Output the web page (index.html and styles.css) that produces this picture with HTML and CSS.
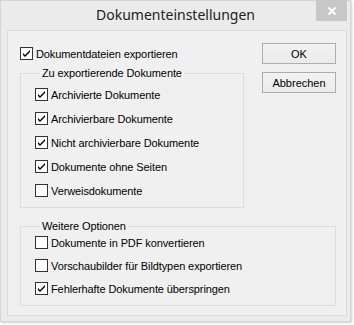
FILE: index.html
```html
<!DOCTYPE html>
<html lang="de">
<head>
<meta charset="utf-8">
<title>Dokumenteinstellungen</title>
<link rel="stylesheet" href="styles.css">
</head>
<body>
<div class="window">
  <div class="titlebar">
    <span class="title">Dokumenteinstellungen</span>
    <span class="close"><svg width="10" height="10" viewBox="0 0 10 10"><path d="M1.5 1.5 L8.5 8.5 M8.5 1.5 L1.5 8.5" stroke="#fff" stroke-width="2.2" fill="none"/></svg></span>
  </div>
  <div class="client">
    <div class="top">
      <div class="leftcol">
        <label class="chk top-chk"><span class="box on"></span><span class="lbl">Dokumentdateien exportieren</span></label>
        <fieldset class="group g1">
          <legend>Zu exportierende Dokumente</legend>
          <label class="chk"><span class="box on"></span><span class="lbl">Archivierte Dokumente</span></label>
          <label class="chk"><span class="box on"></span><span class="lbl">Archivierbare Dokumente</span></label>
          <label class="chk"><span class="box on"></span><span class="lbl">Nicht archivierbare Dokumente</span></label>
          <label class="chk"><span class="box on"></span><span class="lbl">Dokumente ohne Seiten</span></label>
          <label class="chk"><span class="box"></span><span class="lbl">Verweisdokumente</span></label>
        </fieldset>
      </div>
      <div class="buttons">
        <button class="btn">OK</button>
        <button class="btn">Abbrechen</button>
      </div>
    </div>
    <fieldset class="group g2">
      <legend>Weitere Optionen</legend>
      <label class="chk"><span class="box"></span><span class="lbl">Dokumente in PDF konvertieren</span></label>
      <label class="chk"><span class="box"></span><span class="lbl">Vorschaubilder für Bildtypen exportieren</span></label>
      <label class="chk"><span class="box on"></span><span class="lbl">Fehlerhafte Dokumente überspringen</span></label>
    </fieldset>
  </div>
</div>
</body>
</html>
```
FILE: styles.css
```css
html, body {
  margin: 0;
  padding: 0;
  background: #ffffff;
}
body {
  width: 354px;
  height: 325px;
  overflow: hidden;
}
.window {
  width: 351px;
  height: 322px;
  background: #ebebeb;
  box-sizing: border-box;
  border: 1px solid #d4d4d4;
  box-shadow: 1px 1px 2px rgba(0,0,0,0.18);
  display: flex;
  flex-direction: column;
}
.titlebar {
  height: 29px;
  display: flex;
  justify-content: center;
  align-items: center;
  position: relative;
}
.title {
  font-family: "Noto Sans", "Open Sans", sans-serif;
  font-size: 14px;
  color: #222;
  margin-top: -3px;
}
.close {
  position: absolute;
  top: -1px;
  right: 3px;
  width: 31px;
  height: 21px;
  background: #c7c7c7;
  display: flex;
  align-items: center;
  justify-content: center;
}
.client {
  margin: 0 3px 5px 6px;
  flex: 1;
  background: #f0f0f0;
  border: 1px solid #dadada;
  padding: 0 10px 0 12px;
  font-family: "Liberation Sans", Arial, sans-serif;
  font-size: 11px;
  color: #000;
}
.top {
  display: flex;
  justify-content: space-between;
}
.leftcol {
  display: flex;
  flex-direction: column;
}
.chk {
  display: flex;
  align-items: center;
  height: 13px;
  letter-spacing: -0.1px;
}
.box {
  width: 13px;
  height: 13px;
  box-sizing: border-box;
  border: 1px solid #333;
  background: #fff;
  flex: none;
  margin-right: 3px;
}
.box.on {
  background: #fff url("data:image/svg+xml;utf8,<svg xmlns='http://www.w3.org/2000/svg' width='11' height='11' viewBox='0 0 11 11'><path d='M2 5 L4 7 L9 2 L9 4 L4 9 L2 7 Z' fill='black'/></svg>") no-repeat center;
}
.top-chk {
  margin-top: 16px;
}
.group {
  margin: 0;
  border: 1px solid #dcdcdc;
  padding: 0 0 0 14px;
  min-width: 0;
  display: flex;
  flex-direction: column;
}
.group legend {
  padding: 0 2px;
  margin-left: 5px;
  line-height: 13px;
  letter-spacing: -0.1px;
}
.g1 {
  width: 224px;
  box-sizing: border-box;
  margin-top: 7px;
  padding-top: 8px;
  padding-bottom: 10px;
  gap: 11px;
}
.g2 {
  width: 316px;
  box-sizing: border-box;
  margin-top: 12px;
  padding-top: 3px;
  padding-bottom: 10px;
  gap: 10px;
}
.buttons {
  display: flex;
  flex-direction: column;
  gap: 8px;
  padding-top: 12px;
}
.btn {
  width: 74px;
  height: 21px;
  box-sizing: border-box;
  border: 1px solid #adadad;
  background: linear-gradient(#f2f2f2, #ebebeb);
  font-family: "Liberation Sans", Arial, sans-serif;
  font-size: 11px;
  color: #000;
  padding: 0;
  margin: 0;
}
```
